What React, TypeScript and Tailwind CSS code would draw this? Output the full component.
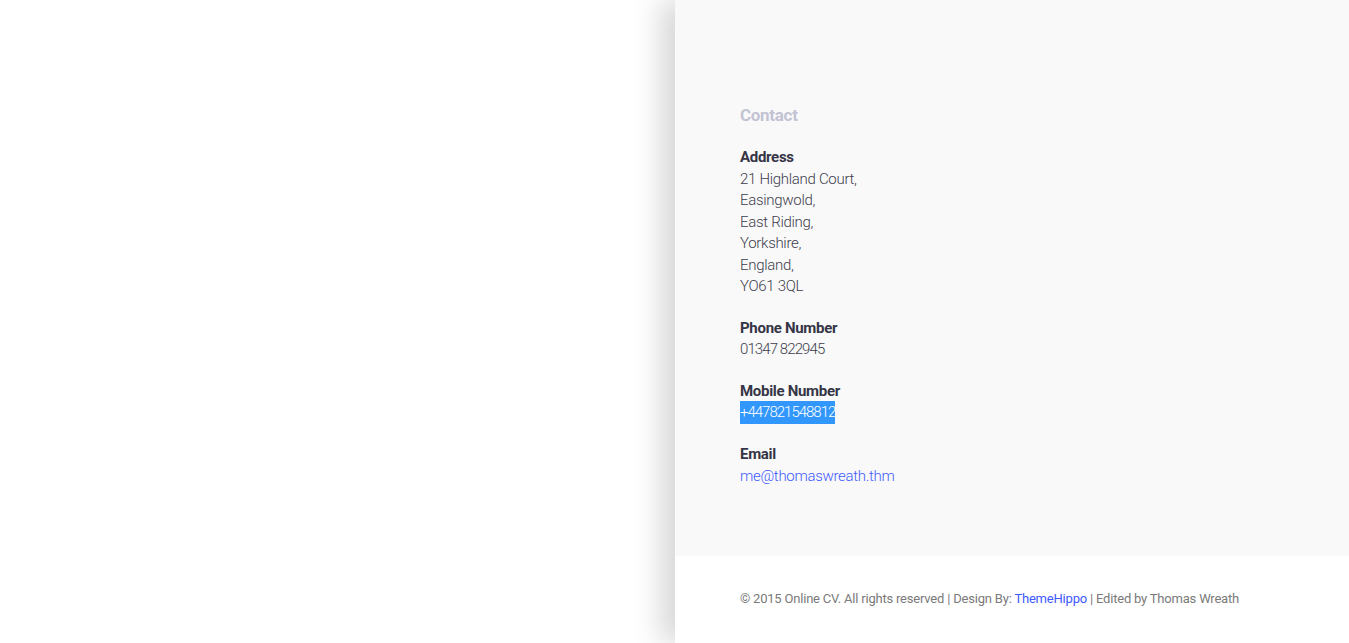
import { FC } from 'react';

const Field: FC<{ label: string; children: React.ReactNode }> = ({ label, children }) => (
  <div className="mb-[20px]">
    <h4 className="font-bold text-[#353546] leading-[21.5px]">{label}</h4>
    {children}
  </div>
);

const App: FC = () => {
  const address = ['21 Highland Court,', 'Easingwold,', 'East Riding,', 'Yorkshire,', 'England,', 'YO61 3QL'];

  return (
    <div className="flex min-h-[643px] bg-white font-['Roboto',sans-serif]">
      <div className="w-[675px] shrink-0 bg-white" />
      <div className="relative z-10 flex flex-1 flex-col shadow-[-14px_0_28px_rgba(0,0,0,0.16)]">
        <section className="h-[556px] bg-[#f9f9f9] px-[65px] pt-[103px] text-[15px] tracking-[-0.3px] text-[#3d3d4d]">
          <h3 className="mb-[20px] text-[17px] font-bold leading-[24px] text-[#c3c3d3]">Contact</h3>
          <Field label="Address">
            {address.map((line) => (
              <p key={line} className="font-light leading-[21.5px]">{line}</p>
            ))}
          </Field>
          <Field label="Phone Number">
            <p className="font-light leading-[21.5px] tracking-[-0.9px]">01347 822945</p>
          </Field>
          <Field label="Mobile Number">
            <p className="-my-[0.75px] w-fit bg-[#3297fd] font-light leading-[23px] tracking-[-1px] text-white">
              +447821548812
            </p>
          </Field>
          <Field label="Email">
            <a className="font-light leading-[21.5px] text-[#3d5afe]" href="#">me@thomaswreath.thm</a>
          </Field>
        </section>
        <footer className="flex h-[87px] items-center bg-white px-[65px] pb-[2px] text-[13px] tracking-[-0.2px] text-[#7a7a7a]">
          <p>
            © 2015 Online CV. All rights reserved | Design By:{' '}
            <a href="#" className="text-[#3d5afe]">ThemeHippo</a> | Edited by Thomas Wreath
          </p>
        </footer>
      </div>
    </div>
  );
};

export default App;
